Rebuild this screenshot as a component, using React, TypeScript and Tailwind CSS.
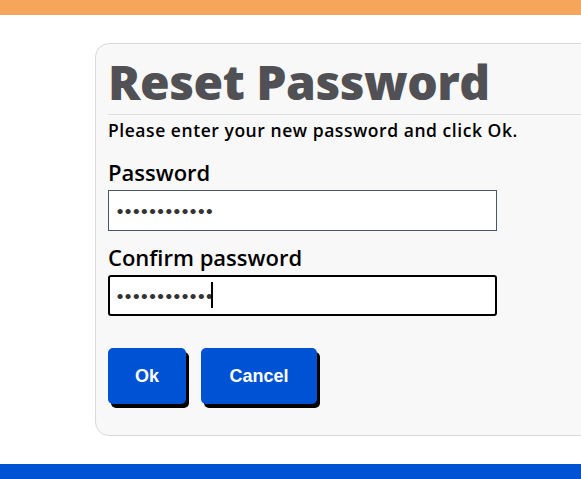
import { useState } from 'react';

export default function App() {
  const [pw, setPw] = useState('abcdefghijkl');
  const [confirm, setConfirm] = useState('abcdefghijkl');

  return (
    <div className="min-h-[479px] bg-white flex flex-col font-['Open_Sans',sans-serif] overflow-hidden">
      <div className="h-[15px] bg-[#f5a65b]" />
      <div className="py-[28px] pl-[95px]">
        <div className="w-[620px] h-[393px] rounded-l-[14px] border border-[#d9d9d9] bg-[#f8f8f8] pl-[12px]">
          <h1 className="h-[71px] text-[48px] leading-[76px] font-extrabold tracking-[-0.5px] text-[#505055] border-b border-[#dedede]">
            Reset Password
          </h1>
          <p className="h-[28px] text-[17.5px] leading-[30px] font-semibold tracking-[0.55px] text-black">
            Please enter your new password and click Ok.
          </p>
          <label className="block mt-[12px] h-[34px] text-[22px] leading-[34px] font-semibold text-black">Password</label>
          <input
            type="password"
            value={pw}
            onChange={(e) => setPw(e.target.value)}
            className="mt-[1px] block w-[389px] h-[41px] bg-white border border-[#4b5563] px-[7px] font-['Lato',sans-serif] text-[14px] text-[#333] outline-none"
          />
          <label className="block mt-[8px] h-[36px] text-[22px] leading-[36px] font-semibold text-black">Confirm password</label>
          <div className="relative w-[389px]">
            <input
              type="password"
              value={confirm}
              onChange={(e) => setConfirm(e.target.value)}
              className="block w-[389px] h-[41px] bg-white border-2 border-black rounded-[3px] px-[6px] font-['Lato',sans-serif] text-[14px] text-[#333] outline-none caret-transparent"
            />
            <span className="absolute left-[103px] top-[7px] w-[2px] h-[26px] bg-black" />
          </div>
          <div className="mt-[32px] flex gap-[15px] font-['Liberation_Sans',Arial,sans-serif]">
            <button className="w-[78px] h-[56px] rounded-[5px] bg-[#0052d4] text-white text-[18px] font-bold shadow-[3px_4px_0_#000]">
              Ok
            </button>
            <button className="w-[116px] h-[56px] rounded-[5px] bg-[#0052d4] text-white text-[18px] font-bold shadow-[3px_4px_0_#000]">
              Cancel
            </button>
          </div>
        </div>
      </div>
      <div className="h-[15px] bg-[#0052d4]" />
    </div>
  );
}
